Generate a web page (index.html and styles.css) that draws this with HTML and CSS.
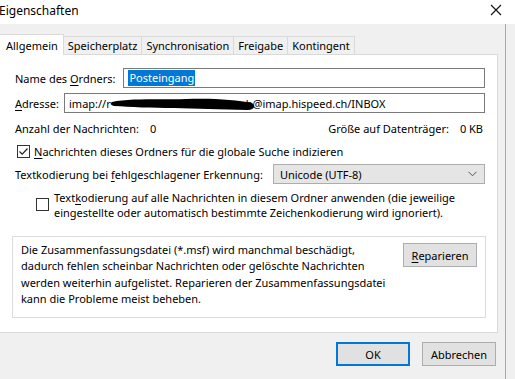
FILE: index.html
```html
<!DOCTYPE html>
<html lang="de">
<head>
    <meta charset="UTF-8">
    <title>Eigenschaften</title>
    <link rel="stylesheet" href="styles.css">
</head>
<body>
    <div class="titlebar">
        <span class="title">Eigenschaften</span>
        <svg class="close" width="12" height="12" viewBox="0 0 12 12"><path d="M1 1L11 11M11 1L1 11" stroke="#111" stroke-width="1.1"/></svg>
    </div>

    <div class="window">
        <div class="tabs">
            <div class="tab active">Allgemein</div>
            <div class="tab">Speicherplatz</div>
            <div class="tab">Synchronisation</div>
            <div class="tab">Freigabe</div>
            <div class="tab">Kontingent</div>
        </div>

        <div class="panel">
            <div class="row">
                <label class="label">Name des <u>O</u>rdners:</label>
                <div class="input name-input"><span class="selected">Posteingang</span></div>
            </div>
            <div class="row">
                <label class="label"><u>A</u>dresse:</label>
                <div class="input addr-input">imap://r<svg class="scribble" width="146" height="16" viewBox="0 0 146 16"><path d="M2 6 C20 2 52 4 76 3 C104 2 126 4 142 7 C146 10 144 14 138 14 C110 13 86 13 64 12 C42 12 20 11 4 10 C0 9 0 7 2 6Z" fill="#000"/></svg>b@imap.hispeed.ch/INBOX</div>
            </div>
            <div class="row stats">
                <span>Anzahl der Nachrichten:<span class="num">0</span></span>
                <span>Größe auf Datenträger:<span class="num">0 KB</span></span>
            </div>
            <div class="row check-row">
                <span class="checkbox checked"><svg width="11" height="11" viewBox="0 0 11 11"><path d="M1.5 5.5L4.2 8.2L9.5 2.5" stroke="#222" stroke-width="1.2" fill="none"/></svg></span>
                <span><u>N</u>achrichten dieses Ordners für die globale Suche indizieren</span>
            </div>
            <div class="row">
                <label class="label">Textkodierung bei <u>f</u>ehlgeschlagener Erkennung:</label>
                <div class="select">
                    <span>Unicode (UTF-8)</span>
                    <svg width="9" height="6" viewBox="0 0 9 6"><path d="M0.5 0.8L4.5 4.8L8.5 0.8" stroke="#555" fill="none"/></svg>
                </div>
            </div>
            <div class="row check-row indent">
                <span class="checkbox"></span>
                <span>Text<u>k</u>odierung auf alle Nachrichten in diesem Ordner anwenden (die jeweilige eingestellte oder automatisch bestimmte Zeichenkodierung wird ignoriert).</span>
            </div>

            <div class="repair-box">
                <p>Die Zusammenfassungsdatei (*.msf) wird manchmal beschädigt,<br>dadurch fehlen scheinbar Nachrichten oder gelöschte Nachrichten<br>werden weiterhin aufgelistet. Reparieren der Zusammenfassungsdatei<br>kann die Probleme meist beheben.</p>
                <button class="btn repair"><u>R</u>eparieren</button>
            </div>
        </div>

        <div class="footer">
            <button class="btn default">OK</button>
            <button class="btn">Abbrechen</button>
        </div>
    </div>
</body>
</html>
```

FILE: styles.css
```css
body, p {
    margin: 0;
    padding: 0;
}

body {
    font-family: 'Segoe UI', 'Noto Sans', sans-serif;
    font-size: 11px;
    color: #000;
    background-color: #f0f0f0;
    width: 515px;
    height: 379px;
    overflow: hidden;
}

u {
    text-decoration: underline;
    text-underline-offset: 2px;
}

/* title bar */
.titlebar {
    height: 24px;
    background-color: #fff;
    display: flex;
    align-items: center;
    justify-content: space-between;
    padding-right: 13px;
}

.title {
    margin-left: -1px;
    font-size: 12px;
    margin-top: -4px;
}

.close {
    margin-top: -4px;
}

/* window body */
.window {
    width: 506px;
    height: 355px;
    border-right: 1px solid #a8a8a8;
    box-sizing: border-box;
    padding-top: 10px;
}

.tabs {
    display: flex;
    align-items: flex-end;
    height: 20px;
    margin-left: -1px;
}

.tab {
    height: 18px;
    line-height: 17px;
    padding: 0 4px;
    border: 1px solid #d9d9d9;
    border-bottom: none;
    margin-left: -1px;
    background-color: #f0f0f0;
    box-sizing: border-box;
}

.tab.active {
    height: 21px;
    line-height: 22px;
    background-color: #fff;
    padding: 0 5px 0 6px;
    position: relative;
    z-index: 1;
    margin-bottom: -1px;
    margin-left: 0;
}

.panel {
    background-color: #fff;
    border: 1px solid #d9d9d9;
    margin-left: -1px;
    width: 499px;
    height: 279px;
    box-sizing: border-box;
    padding: 13px 13px 0 15px;
}

.row {
    display: flex;
    align-items: center;
    height: 20px;
    margin-bottom: 5px;
}

.label {
    white-space: nowrap;
    margin-right: 8px;
}

.input {
    flex: 1;
    height: 20px;
    border: 1px solid #7a7a7a;
    box-sizing: border-box;
    display: flex;
    align-items: center;
    padding-left: 4px;
    white-space: nowrap;
    overflow: hidden;
}

.name-input {
    margin-right: -1px;
}

.addr-input {
    margin-left: -3px;
    margin-right: -1px;
}

.selected {
    background-color: #0078d7;
    color: #fff;
    padding: 0 1px;
    line-height: 16px;
}

.scribble {
    margin: 2px -10px 0 -1px;
    flex-shrink: 0;
}

.stats {
    justify-content: space-between;
    height: 16px;
    margin-top: 7px;
    margin-bottom: 7px;
    padding-right: 1px;
}

.num {
    margin-left: 11px;
}

.check-row {
    align-items: center;
    height: 16px;
    margin-bottom: 5px;
    padding-left: 2px;
}

.checkbox {
    width: 13px;
    height: 13px;
    border: 1px solid #333;
    box-sizing: border-box;
    margin-right: 4px;
    flex-shrink: 0;
    display: flex;
    align-items: center;
    justify-content: center;
    background-color: #fff;
}

.select {
    flex: 1;
    height: 20px;
    background-color: #e5e5e5;
    border: 1px solid #adadad;
    box-sizing: border-box;
    display: flex;
    align-items: center;
    justify-content: space-between;
    padding: 0 7px 0 6px;
    margin-left: 2px;
    margin-right: -1px;
}

.indent {
    align-items: flex-start;
    height: 32px;
    padding-left: 21px;
    padding-right: 8px;
    margin-top: 6px;
    line-height: 15px;
}

.indent .checkbox {
    margin-top: 8px;
    margin-right: 5px;
}

.repair-box {
    margin: 14px -2px 0 -3px;
    height: 82px;
    border: 1px solid #dcdcdc;
    box-sizing: border-box;
    display: flex;
    justify-content: space-between;
    align-items: flex-start;
    padding: 5px 8px 0 8px;
}

.repair-box p {
    line-height: 16.3px;
    white-space: nowrap;
}

/* buttons */
.btn {
    font-family: inherit;
    font-size: 11px;
    height: 24px;
    width: 74px;
    background-color: #e1e1e1;
    border: 1px solid #adadad;
    padding: 0;
    color: #000;
}

.repair {
    margin-top: 1px;
}

.footer {
    display: flex;
    justify-content: flex-end;
    gap: 12px;
    padding: 9px 9px 0 0;
}

.btn.default {
    border: 2px solid #0078d7;
}
```
